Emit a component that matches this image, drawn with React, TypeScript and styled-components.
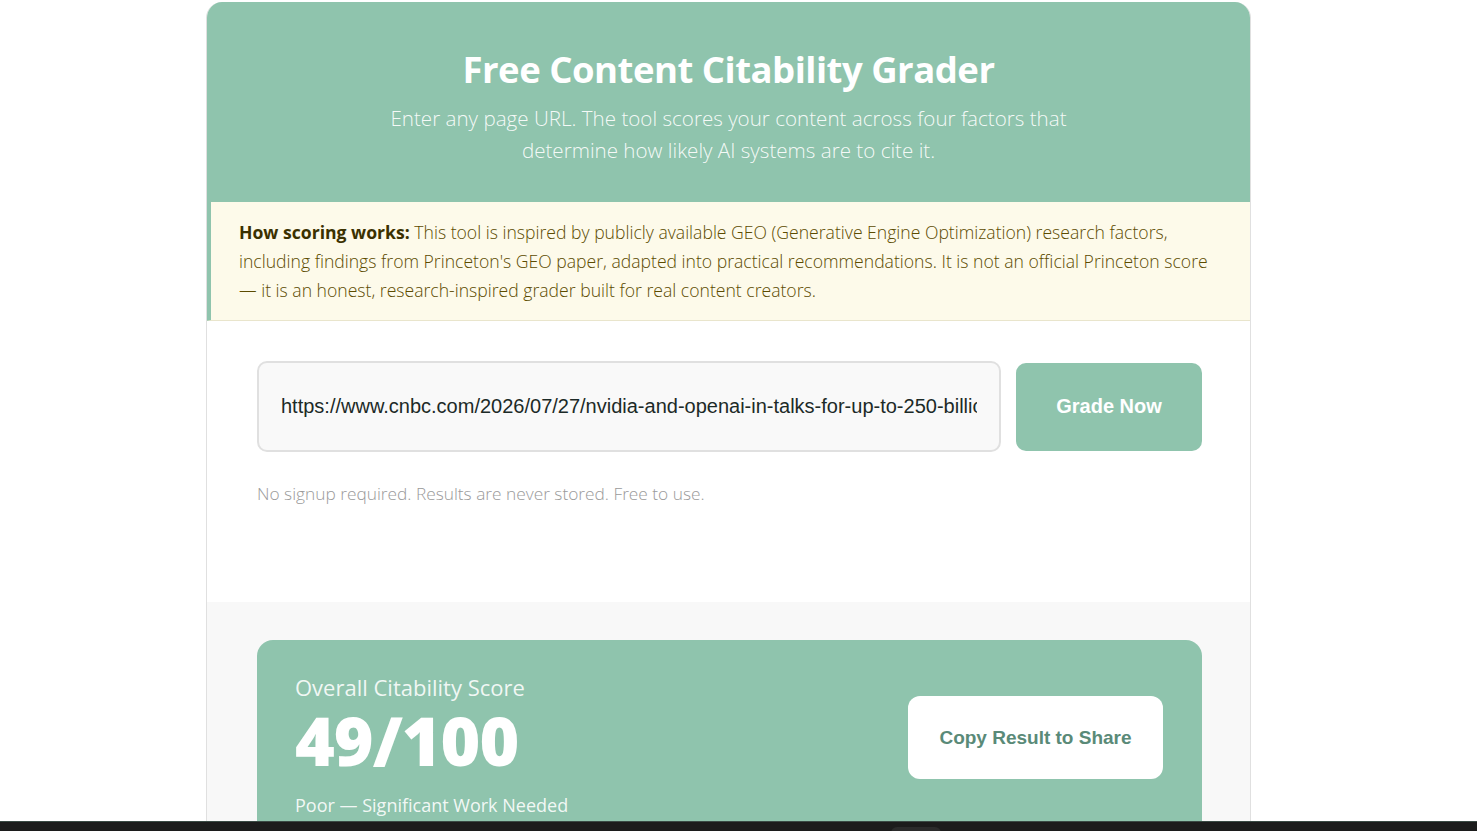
import styled, { createGlobalStyle } from "styled-components";

const GlobalStyle = createGlobalStyle`
  * {
    box-sizing: border-box;
  }
  body {
    margin: 0;
    background: #ffffff;
    font-family: "Open Sans", "Noto Sans", sans-serif;
    overflow: hidden;
  }
`;

const Page = styled.div`
  padding: 2px 226px 0 206px;
  height: 831px;
  overflow: hidden;
`;

const Card = styled.div`
  width: 1045px;
  border-radius: 16px 16px 0 0;
  overflow: hidden;
  border: 1px solid #e0e0e0;
  border-top: none;
  background: #ffffff;
`;

const Header = styled.header`
  background: #8fc4ad;
  color: #ffffff;
  text-align: center;
  padding: 42px 40px 36px;
  margin: 0 -1px;
`;

const Title = styled.h1`
  margin: 0 0 8px;
  font-size: 36.5px;
  font-weight: 700;
  line-height: 50px;
  letter-spacing: -0.5px;
`;

const Subtitle = styled.p`
  margin: 0 auto;
  max-width: 710px;
  font-size: 20.6px;
  font-weight: 300;
  line-height: 32px;
  color: rgba(255, 255, 255, 0.92);
`;

const Notice = styled.div`
  background: #fdfaea;
  border-left: 5px solid #8fc4ad;
  border-bottom: 1px solid #e9e5cc;
  margin-left: -1px;
  padding: 16px 28px 15px;
  font-size: 17.6px;
  font-weight: 300;
  line-height: 29px;
  color: #5c4b00;

  strong {
    font-weight: 700;
    color: #3b3100;
  }
`;

const FormSection = styled.section`
  padding: 40px 48px 96px 50px;
`;

const FormRow = styled.div`
  display: flex;
  gap: 15px;
  align-items: center;
`;

const UrlInput = styled.input`
  flex: 1;
  height: 91px;
  border: 2px solid #e0e0e0;
  border-radius: 10px;
  background: #f9f9f9;
  padding: 0 22px;
  font-family: "Liberation Sans", Arial, sans-serif;
  font-size: 20px;
  color: #1c2a27;
  outline: none;
`;

const GradeButton = styled.button`
  width: 186px;
  height: 88px;
  border: none;
  border-radius: 10px;
  background: #8fc4ad;
  color: #ffffff;
  font-family: "Liberation Sans", Arial, sans-serif;
  font-size: 20px;
  font-weight: 700;
  cursor: pointer;
`;

const Hint = styled.p`
  margin: 30px 0 0;
  font-size: 17.3px;
  font-weight: 300;
  line-height: 24px;
  color: #9a9a9a;
`;

const ResultSection = styled.section`
  background: #f8f8f8;
  padding: 38px 48px 40px 50px;
`;

const ScoreCard = styled.div`
  background: #8fc4ad;
  border-radius: 16px;
  padding: 32px 39px 40px 38px;
  display: flex;
  align-items: flex-start;
  justify-content: space-between;
  color: #ffffff;
`;

const ScoreInfo = styled.div`
  display: flex;
  flex-direction: column;
`;

const ScoreLabel = styled.span`
  font-size: 22px;
  font-weight: 400;
  color: rgba(255, 255, 255, 0.88);
  line-height: 30px;
`;

const ScoreValue = styled.span`
  font-size: 68px;
  font-weight: 800;
  line-height: 76px;
  letter-spacing: -1px;
`;

const ScoreVerdict = styled.span`
  margin-top: 15px;
  font-size: 18px;
  line-height: 24px;
  color: rgba(255, 255, 255, 0.9);
`;

const CopyButton = styled.button`
  width: 255px;
  height: 83px;
  border: none;
  border-radius: 12px;
  background: #ffffff;
  color: #5a8a78;
  font-family: "Liberation Sans", Arial, sans-serif;
  font-size: 19px;
  font-weight: 700;
  cursor: pointer;
  margin-top: 24px;
`;

const Taskbar = styled.div`
  position: fixed;
  left: 0;
  right: 0;
  bottom: 0;
  height: 10px;
  background: #1c1c1c;
  border-top: 1px solid #3a4a44;
`;

const TaskTab = styled.div`
  position: absolute;
  left: 891px;
  top: 5px;
  width: 50px;
  height: 8px;
  border-radius: 6px 6px 0 0;
  background: #2b2b2b;
`;

const App = () => {
  return (
    <>
      <GlobalStyle />
      <Page>
        <Card>
          <Header>
            <Title>Free Content Citability Grader</Title>
            <Subtitle>
              Enter any page URL. The tool scores your content across four
              factors that determine how likely AI systems are to cite it.
            </Subtitle>
          </Header>
          <Notice>
            <strong>How scoring works:</strong> This tool is inspired by
            publicly available GEO (Generative Engine Optimization) research
            factors, including findings from Princeton's GEO paper, adapted
            into practical recommendations. It is not an official Princeton
            score — it is an honest, research-inspired grader built for real
            content creators.
          </Notice>
          <FormSection>
            <FormRow>
              <UrlInput
                type="url"
                defaultValue="https://www.cnbc.com/2026/07/27/nvidia-and-openai-in-talks-for-up-to-250-billion.html"
              />
              <GradeButton>Grade Now</GradeButton>
            </FormRow>
            <Hint>No signup required. Results are never stored. Free to use.</Hint>
          </FormSection>
          <ResultSection>
            <ScoreCard>
              <ScoreInfo>
                <ScoreLabel>Overall Citability Score</ScoreLabel>
                <ScoreValue>49/100</ScoreValue>
                <ScoreVerdict>Poor — Significant Work Needed</ScoreVerdict>
              </ScoreInfo>
              <CopyButton>Copy Result to Share</CopyButton>
            </ScoreCard>
          </ResultSection>
        </Card>
      </Page>
      <Taskbar>
        <TaskTab />
      </Taskbar>
    </>
  );
};

export default App;
